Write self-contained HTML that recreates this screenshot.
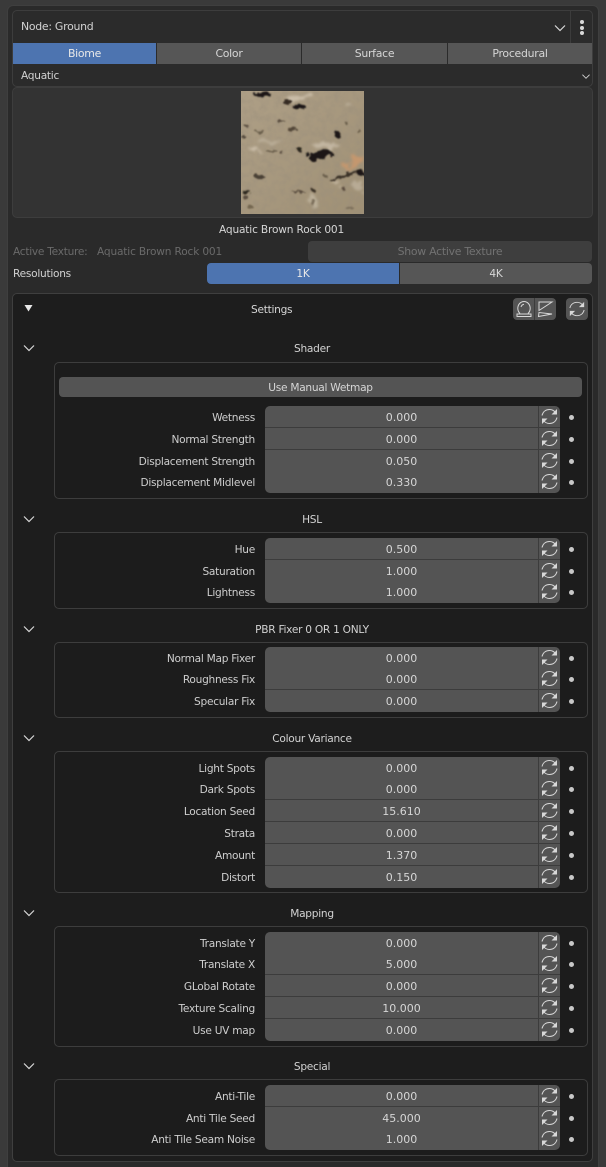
<!DOCTYPE html>
<html style="height:1167px;overflow:hidden"><head><meta charset="utf-8"><style>
html,body{margin:0;padding:0}
body{width:606px;height:1167px;position:relative;overflow:hidden;background:#3a3a3a;font:10.6px/14px "DejaVu Sans",sans-serif;letter-spacing:-.27px;color:#d2d2d2}
div,svg,span{position:absolute;box-sizing:border-box}
.t{white-space:nowrap;line-height:14px}
.c{text-align:center}
.p{background:#2a2a2a;border:1px solid #3d3d3d;border-radius:5px}
.tab{top:43px;height:21px;background:#565656;line-height:21px;text-align:center;color:#d6d6d6;font-size:10.9px}
.g{left:54px;width:534px;border:1px solid #3d3d3d;border-radius:5px;background:#1c1c1c}
.h{left:54px;width:516px;text-align:center;line-height:14px;color:#d2d2d2}
.r{left:0;width:606px;height:22px}
.r .l{right:351px;top:5px;line-height:14px;white-space:nowrap;color:#cecece}
.r .f{left:265px;width:273px;height:22px;padding:1px 0 0 0;background:#545454;border-bottom:1px solid #3c3c3c;text-align:center;line-height:22px;color:#d6d6d6;font-size:11px;letter-spacing:0}
.r .b{left:538px;width:22px;height:22px;background:#545454;border-bottom:1px solid #3c3c3c;border-left:1px solid #3c3c3c}
.r .d{left:569px;top:9px;width:5px;height:5px;border-radius:50%;background:#c8c8c8}
.r .b svg{left:0;top:0;width:21px;height:21px}
.s .f{border-top-left-radius:5px}.s .b{border-top-right-radius:5px}
.e .f{border-bottom-left-radius:5px;border-bottom:0}.e .b{border-bottom-right-radius:5px;border-bottom:0}
.ch{left:22px;width:14px;height:8px}
</style></head><body>
<svg width="0" height="0" style="left:0;top:0"><defs>
<symbol id="rf" viewBox="0 0 21 21"><g fill="none" stroke="#d8d8d8" stroke-width="1"><path d="M3 9.500C4 5.500 7 3.500 10.500 3.500C13 3.500 15 4.500 16.500 6.500"/><path d="M18 3V8.500H12.500Z" fill="#d8d8d8" stroke="none"/><path d="M18 11.500C17 15.500 14 17.500 10.500 17.500C8 17.500 6 16.500 4.500 14.500"/><path d="M3 18V12.500H8.500Z" fill="#d8d8d8" stroke="none"/></g></symbol>
<symbol id="cv" viewBox="0 0 14 8"><path d="M2 1.500L7 6.500L12 1.500" fill="none" stroke="#d8d8d8" stroke-width="1.200"/></symbol>
<linearGradient id="tx" x1="0" y1="0" x2="1" y2="1"><stop offset="0" stop-color="#ae9f86"/><stop offset="1" stop-color="#9f9075"/></linearGradient>
<filter id="bl" x="-20%" y="-20%" width="140%" height="140%"><feTurbulence type="fractalNoise" baseFrequency="0.035" numOctaves="3" seed="7" result="n"/><feDisplacementMap in="SourceGraphic" in2="n" scale="40"/><feGaussianBlur stdDeviation="4"/></filter>
<filter id="bd" x="-30%" y="-30%" width="160%" height="160%"><feTurbulence type="fractalNoise" baseFrequency="0.06" numOctaves="3" seed="11" result="n"/><feDisplacementMap in="SourceGraphic" in2="n" scale="18"/><feGaussianBlur stdDeviation="2.600"/></filter>
<filter id="gr" x="0" y="0" width="100%" height="100%"><feTurbulence type="fractalNoise" baseFrequency="0.045" numOctaves="4" seed="3"/><feColorMatrix values="0 0 0 0 0.32 0 0 0 0 0.27 0 0 0 0 0.2 0 0 0 0.9 -0.3"/></filter>
</defs></svg>

<div style="left:7px;top:5px;width:592px;height:1162px;background:#2a2a2a;border:1px solid #3f3f3f;border-bottom:0;border-radius:6px 6px 0 0"></div>

<div class="p" style="left:12px;top:10px;width:581px;height:77px;background:#2b2b2b"></div>
<div class="t" style="left:21px;top:20px;font-size:10.9px">Node: Ground</div>
<svg style="left:553px;top:24px;width:14px;height:8px"><use href="#cv"/></svg>
<div style="left:570px;top:11px;width:1px;height:32px;background:#3c3c3c"></div>
<div style="left:580px;top:20px;width:4px;height:4px;border-radius:50%;background:#d8d8d8"></div>
<div style="left:580px;top:25.500px;width:4px;height:4px;border-radius:50%;background:#d8d8d8"></div>
<div style="left:580px;top:31px;width:4px;height:4px;border-radius:50%;background:#d8d8d8"></div>

<div class="tab" style="left:13px;width:143px;background:#4d74b0;color:#e8e8e8">Biome</div>
<div class="tab" style="left:157px;width:144px">Color</div>
<div class="tab" style="left:302px;width:145px">Surface</div>
<div class="tab" style="left:448px;width:144px">Procedural</div>
<div class="t" style="left:21px;top:69px">Aquatic</div>
<svg style="left:581px;top:73px;width:10px;height:7px" viewBox="0 0 14 8"><use href="#cv"/></svg>

<div class="p" style="left:12px;top:87px;width:581px;height:131px;background:#333"></div>
<svg style="left:241px;top:91px;width:123px;height:123px" viewBox="33 18 369 369">
<rect x="33" y="18" width="369" height="369" fill="url(#tx)"/>
<g filter="url(#gr)"><rect x="33" y="18" width="369" height="369"/></g>
<g filter="url(#bl)">
<ellipse cx="215" cy="42" rx="40" ry="9" fill="#cabda8" transform="rotate(-10 215 42)"/>
<ellipse cx="120" cy="170" rx="40" ry="7" fill="#baad97"/>
<ellipse cx="290" cy="182" rx="40" ry="10" fill="#c2b6a1"/>
<ellipse cx="372" cy="232" rx="36" ry="10" fill="#c4976e" transform="rotate(-28 372 232)"/>
<ellipse cx="385" cy="300" rx="18" ry="16" fill="#b8ab95"/>
<ellipse cx="75" cy="195" rx="14" ry="7" fill="#cabda8"/>
<ellipse cx="320" cy="295" rx="12" ry="7" fill="#cabda8"/>
<ellipse cx="250" cy="350" rx="12" ry="18" fill="#bcb09a"/>
<ellipse cx="360" cy="65" rx="10" ry="5" fill="#bcb09a"/>
</g>
<g fill="#1b1714" filter="url(#bd)">
<ellipse cx="97" cy="29" rx="26" ry="8"/>
<ellipse cx="172" cy="50" rx="16" ry="6" fill="#342c24"/>
<ellipse cx="208" cy="66" rx="20" ry="9"/>
<ellipse cx="322" cy="148" rx="9" ry="10"/>
<ellipse cx="275" cy="208" rx="32" ry="12" transform="rotate(-8 275 208)"/>
<ellipse cx="250" cy="222" rx="10" ry="8"/>
<ellipse cx="232" cy="208" rx="7" ry="6"/>
<ellipse cx="210" cy="194" rx="7" ry="7" fill="#2c261e"/>
<ellipse cx="186" cy="132" rx="15" ry="8" fill="#524638"/>
<ellipse cx="155" cy="110" rx="13" ry="4" fill="#5a4e40"/>
<ellipse cx="88" cy="275" rx="16" ry="6" fill="#4a4034"/>
<ellipse cx="50" cy="322" rx="13" ry="6" fill="#2c261e"/>
<ellipse cx="48" cy="338" rx="9" ry="6" fill="#5a4e40"/>
<ellipse cx="205" cy="320" rx="20" ry="3" fill="#5a4e40"/>
<ellipse cx="125" cy="198" rx="17" ry="4" fill="#6a5e4c"/>
<ellipse cx="155" cy="203" rx="6" ry="5" fill="#5a4e40"/>
<ellipse cx="345" cy="272" rx="48" ry="5" transform="rotate(-20 345 272)" fill="#3a3028"/>
<ellipse cx="392" cy="264" rx="11" ry="9"/>
<ellipse cx="250" cy="316" rx="4" ry="5" fill="#3a3028"/>
<ellipse cx="340" cy="310" rx="5" ry="5" fill="#5a4c3c"/>
<ellipse cx="52" cy="125" rx="6" ry="4" fill="#5a4e40"/>
<ellipse cx="90" cy="140" rx="15" ry="4" fill="#6a5e4c"/>
<ellipse cx="60" cy="366" rx="9" ry="7" fill="#736650"/>
<ellipse cx="250" cy="352" rx="7" ry="10" fill="#7d705c"/>
<ellipse cx="388" cy="140" rx="6" ry="6" fill="#6a5e4c"/>
<ellipse cx="350" cy="115" rx="5" ry="4" fill="#6a5e4c"/>
<ellipse cx="40" cy="155" rx="7" ry="3" fill="#4a4034"/>
<ellipse cx="285" cy="272" rx="6" ry="5" fill="#6a5e4c"/>
<ellipse cx="360" cy="370" rx="14" ry="4" fill="#7d705c"/>
</g></svg>

<div class="t" style="left:219px;top:222.500px;color:#d6d6d6;letter-spacing:-.17px">Aquatic Brown Rock 001</div>
<div class="t" style="left:13px;top:244.500px;color:#6a6a6a">Active Texture:</div>
<div class="t" style="left:97px;top:244.500px;color:#6a6a6a;letter-spacing:-.17px">Aquatic Brown Rock 001</div>
<div style="left:308px;top:241px;width:284px;height:21px;background:#3e3e3e;border-radius:4px;text-align:center;line-height:21px;color:#727272;font-size:10.9px">Show Active Texture</div>
<div class="t" style="left:13px;top:267px">Resolutions</div>
<div style="left:207px;top:263px;width:192px;height:21px;padding-top:1px;background:#4d74b0;border-radius:4px 0 0 4px;text-align:center;line-height:21px;color:#e8e8e8">1K</div>
<div style="left:400px;top:263px;width:192px;height:21px;padding-top:1px;background:#565656;border-radius:0 4px 4px 0;text-align:center;line-height:21px;color:#d6d6d6">4K</div>

<div style="left:12px;top:293px;width:581px;height:869px;background:#1d1d1d;border:1px solid #3f3f3f;border-radius:5px"></div>
<svg style="left:24px;top:304px;width:9px;height:8px"><path d="M0.500 1H8.500L4.500 7.500Z" fill="#e8e8e8"/></svg>
<div class="t" style="left:251px;top:303px;color:#d6d6d6">Settings</div>

<div style="left:513px;top:298px;width:43px;height:22px;background:#545454;border-radius:4px"></div>
<div style="left:534px;top:298px;width:1px;height:22px;background:#3c3c3c"></div>
<svg style="left:514px;top:299px;width:20px;height:20px" viewBox="0 0 20 20"><g fill="none" stroke="#d8d8d8" stroke-width="1"><path d="M6 14.500A6.200 6.800 0 1 1 14 14.500"/><path d="M3 17.500H17V15H3Z"/><path d="M7 8C7.500 6.500 8.500 5.500 10 5.300"/></g></svg>
<svg style="left:535px;top:299px;width:20px;height:20px" viewBox="0 0 20 20"><g fill="none" stroke="#d8d8d8" stroke-width="1"><path d="M3.500 3H17L4 11.500V3Z"/><path d="M3.500 17.500L17 15L4 13.500Z"/></g></svg>
<div style="left:566px;top:298px;width:22px;height:22px;background:#545454;border-radius:4px"></div>
<svg style="left:567px;top:299px;width:20px;height:20px"><use href="#rf"/></svg>

<svg class="ch" style="top:344px"><use href="#cv"/></svg><div class="h" style="top:342px">Shader</div>
<div class="g" style="top:362px;height:137px"></div>
<div style="left:59px;top:377px;width:523px;height:20px;padding-top:1px;background:#545454;border-radius:4px;text-align:center;line-height:20px;color:#d6d6d6">Use Manual Wetmap</div>
<div class="r s" style="top:406px"><span class="l">Wetness</span><div class="f">0.000</div><div class="b"><svg><use href="#rf"/></svg></div><div class="d"></div></div>
<div class="r" style="top:428px"><span class="l">Normal Strength</span><div class="f">0.000</div><div class="b"><svg><use href="#rf"/></svg></div><div class="d"></div></div>
<div class="r" style="top:450px"><span class="l">Displacement Strength</span><div class="f">0.050</div><div class="b"><svg><use href="#rf"/></svg></div><div class="d"></div></div>
<div class="r e" style="top:471px"><span class="l">Displacement Midlevel</span><div class="f">0.330</div><div class="b"><svg><use href="#rf"/></svg></div><div class="d"></div></div>

<svg class="ch" style="top:515px"><use href="#cv"/></svg><div class="h" style="top:513px">HSL</div>
<div class="g" style="top:532px;height:77px"></div>
<div class="r s" style="top:538px"><span class="l">Hue</span><div class="f">0.500</div><div class="b"><svg><use href="#rf"/></svg></div><div class="d"></div></div>
<div class="r" style="top:560px"><span class="l">Saturation</span><div class="f">1.000</div><div class="b"><svg><use href="#rf"/></svg></div><div class="d"></div></div>
<div class="r e" style="top:581px"><span class="l">Lightness</span><div class="f">1.000</div><div class="b"><svg><use href="#rf"/></svg></div><div class="d"></div></div>

<svg class="ch" style="top:625px"><use href="#cv"/></svg><div class="h" style="top:623px">PBR Fixer 0 OR 1 ONLY</div>
<div class="g" style="top:642px;height:76px"></div>
<div class="r s" style="top:647px"><span class="l">Normal Map Fixer</span><div class="f">0.000</div><div class="b"><svg><use href="#rf"/></svg></div><div class="d"></div></div>
<div class="r" style="top:668px"><span class="l">Roughness Fix</span><div class="f">0.000</div><div class="b"><svg><use href="#rf"/></svg></div><div class="d"></div></div>
<div class="r e" style="top:690px"><span class="l">Specular Fix</span><div class="f">0.000</div><div class="b"><svg><use href="#rf"/></svg></div><div class="d"></div></div>

<svg class="ch" style="top:734px"><use href="#cv"/></svg><div class="h" style="top:732px">Colour Variance</div>
<div class="g" style="top:751px;height:142px"></div>
<div class="r s" style="top:757px"><span class="l">Light Spots</span><div class="f">0.000</div><div class="b"><svg><use href="#rf"/></svg></div><div class="d"></div></div>
<div class="r" style="top:778px"><span class="l">Dark Spots</span><div class="f">0.000</div><div class="b"><svg><use href="#rf"/></svg></div><div class="d"></div></div>
<div class="r" style="top:800px"><span class="l">Location Seed</span><div class="f">15.610</div><div class="b"><svg><use href="#rf"/></svg></div><div class="d"></div></div>
<div class="r" style="top:822px"><span class="l">Strata</span><div class="f">0.000</div><div class="b"><svg><use href="#rf"/></svg></div><div class="d"></div></div>
<div class="r" style="top:844px"><span class="l">Amount</span><div class="f">1.370</div><div class="b"><svg><use href="#rf"/></svg></div><div class="d"></div></div>
<div class="r e" style="top:866px"><span class="l">Distort</span><div class="f">0.150</div><div class="b"><svg><use href="#rf"/></svg></div><div class="d"></div></div>

<svg class="ch" style="top:909px"><use href="#cv"/></svg><div class="h" style="top:907px">Mapping</div>
<div class="g" style="top:926px;height:121px"></div>
<div class="r s" style="top:932px"><span class="l">Translate Y</span><div class="f">0.000</div><div class="b"><svg><use href="#rf"/></svg></div><div class="d"></div></div>
<div class="r" style="top:953px"><span class="l">Translate X</span><div class="f">5.000</div><div class="b"><svg><use href="#rf"/></svg></div><div class="d"></div></div>
<div class="r" style="top:975px"><span class="l">GLobal Rotate</span><div class="f">0.000</div><div class="b"><svg><use href="#rf"/></svg></div><div class="d"></div></div>
<div class="r" style="top:997px"><span class="l">Texture Scaling</span><div class="f">10.000</div><div class="b"><svg><use href="#rf"/></svg></div><div class="d"></div></div>
<div class="r e" style="top:1019px"><span class="l">Use UV map</span><div class="f">0.000</div><div class="b"><svg><use href="#rf"/></svg></div><div class="d"></div></div>

<svg class="ch" style="top:1062px"><use href="#cv"/></svg><div class="h" style="top:1060px">Special</div>
<div class="g" style="top:1079px;height:77px"></div>
<div class="r s" style="top:1085px"><span class="l">Anti-Tile</span><div class="f">0.000</div><div class="b"><svg><use href="#rf"/></svg></div><div class="d"></div></div>
<div class="r" style="top:1107px"><span class="l">Anti Tile Seed</span><div class="f">45.000</div><div class="b"><svg><use href="#rf"/></svg></div><div class="d"></div></div>
<div class="r e" style="top:1128px"><span class="l">Anti Tile Seam Noise</span><div class="f">1.000</div><div class="b"><svg><use href="#rf"/></svg></div><div class="d"></div></div>
</body></html>
